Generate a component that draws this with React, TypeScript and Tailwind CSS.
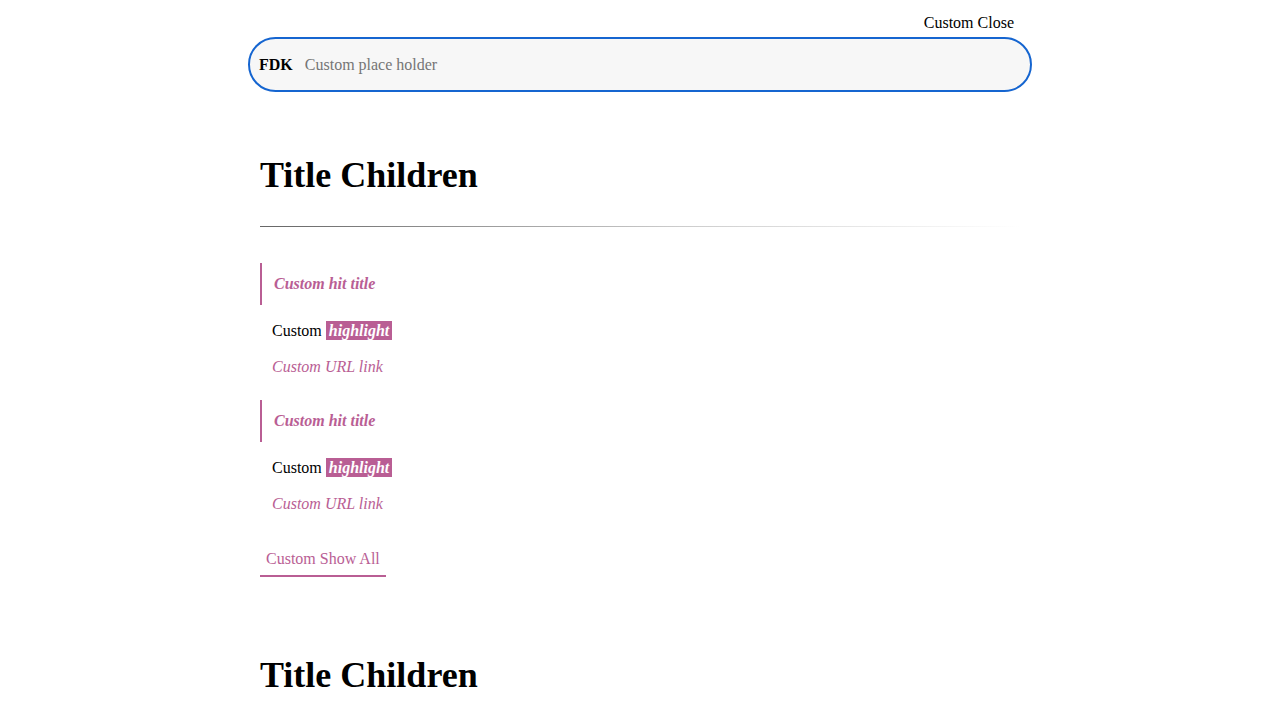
import React from 'react';

const PINK = 'text-[#b95e94]';

const HitItem: React.FC = () => (
  <div className="mt-[24px] first:mt-0">
    <div className="flex h-[42px] items-center border-l-2 border-[#b95e94] pl-[12px]">
      <span className={`text-[16px] font-bold italic ${PINK}`}>Custom hit title</span>
    </div>
    <div className="mt-[16px] flex h-[19px] items-center pl-[12px] text-[16px] text-black">
      <span>Custom</span>
      <span className="ml-[4px] bg-[#b95e94] px-[3px] text-[16px] leading-[19px] font-bold italic text-white">highlight</span>
    </div>
    <div className={`mt-[17px] flex h-[19px] items-center pl-[12px] text-[16px] italic ${PINK}`}>Custom URL link</div>
  </div>
);

const Section: React.FC<{ hits: boolean }> = ({ hits }) => (
  <div className="px-[12px]">
    <h1 className="flex h-[43px] items-center text-[36px] font-bold leading-none text-black">Title Children</h1>
    {hits && (
      <>
        <div className="mt-[30px] h-px bg-gradient-to-r from-[#666666] via-[#cccccc] via-[55%] to-white/0" />
        <div className="mt-[36px]">
          <HitItem />
          <HitItem />
        </div>
        <div className="mt-[34px] inline-flex h-[30px] items-center border-b-2 border-[#b95e94] px-[6px] pb-[4px]">
          <span className={`text-[16px] ${PINK}`}>Custom Show All</span>
        </div>
      </>
    )}
  </div>
);

export default function App() {
  return (
    <div className="min-h-screen bg-white font-['Liberation_Serif',serif] text-black">
      <div className="mx-auto w-[784px]">
        <div className="flex h-[37px] items-start justify-end pt-[14px] pr-[18px]">
          <button className="text-[16px] leading-[18px] text-black">Custom Close</button>
        </div>
        <div className="flex h-[55px] items-center rounded-full border-2 border-[#1565d0] bg-[#f7f7f7] pl-[9px]">
          <span className="text-[16px] font-bold text-black">FDK</span>
          <input
            className="ml-[12px] flex-1 bg-transparent text-[16px] text-black outline-none placeholder:text-[#757575]"
            placeholder="Custom place holder"
          />
        </div>
        <div className="mt-[61px]">
          <Section hits />
        </div>
        <div className="mt-[76px]">
          <Section hits={false} />
        </div>
      </div>
    </div>
  );
}
